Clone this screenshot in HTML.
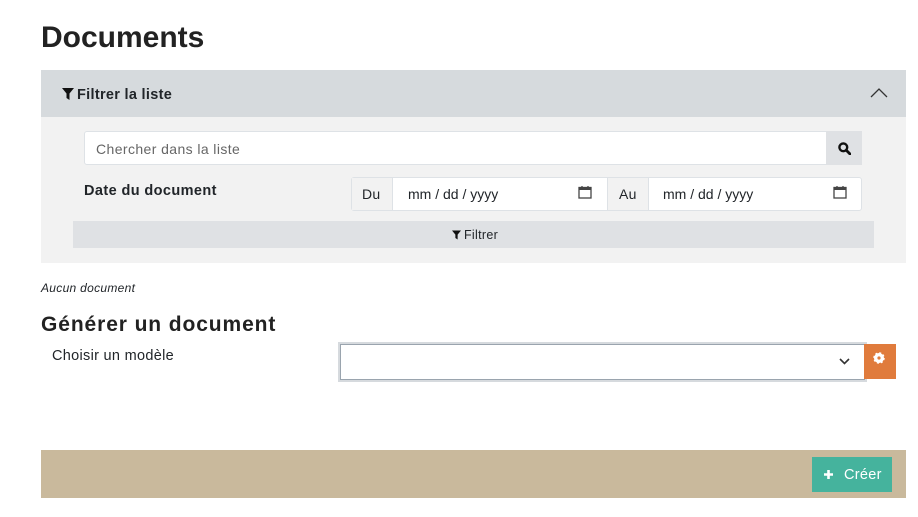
<!DOCTYPE html>
<html><head><style>
*{box-sizing:border-box;margin:0;padding:0}
body{width:918px;height:517px;background:#fff;font-family:"Liberation Sans",sans-serif;color:#212529;position:relative;overflow:hidden}
.a{position:absolute;letter-spacing:0.3px}
</style></head><body>
<div class="a" style="left:41px;top:21px;font-size:30px;font-weight:bold;color:#222;letter-spacing:0">Documents</div>
<div class="a" style="left:41px;top:70px;width:865px;height:47px;background:#d6dadd"></div>
<svg class="a" style="left:62px;top:88px" width="12" height="12" viewBox="0 0 12 12"><path d="M0 0H12L7.5 5.5V12L4.5 10V5.5Z" fill="#111"/></svg>
<div class="a" style="left:77px;top:87px;font-size:14.5px;font-weight:bold">Filtrer la liste</div>
<svg class="a" style="left:870px;top:88px" width="18" height="10" viewBox="0 0 18 10"><path d="M1 9L9 1L17 9" fill="none" stroke="#333" stroke-width="1.3"/></svg>
<div class="a" style="left:41px;top:117px;width:865px;height:146px;background:#f2f2f2"></div>
<div class="a" style="left:84px;top:131px;width:778px;height:34px;background:#fff;border:1px solid #dee2e6;border-radius:3px"></div>
<div class="a" style="left:96px;top:141px;font-size:14px;color:#666;letter-spacing:0.4px">Chercher dans la liste</div>
<div class="a" style="left:826px;top:131px;width:36px;height:34px;background:#dfe1e4"></div>
<svg class="a" style="left:838px;top:142px" width="13" height="13" viewBox="0 0 13 13"><circle cx="5.3" cy="5.3" r="3.9" fill="none" stroke="#111" stroke-width="2.4"/><path d="M8.3 8.3L12 12" stroke="#111" stroke-width="2.8" stroke-linecap="round"/></svg>
<div class="a" style="left:84px;top:183px;font-size:14.5px;font-weight:bold;letter-spacing:0.4px">Date du document</div>
<div class="a" style="left:351px;top:177px;width:511px;height:34px;background:#fff;border:1px solid #dee2e6;border-radius:3px"></div>
<div class="a" style="left:352px;top:178px;width:41px;height:32px;background:#f2f2f2;border-right:1px solid #dee2e6"></div>
<div class="a" style="left:607px;top:178px;width:42px;height:32px;background:#f2f2f2;border-left:1px solid #dee2e6;border-right:1px solid #dee2e6"></div>
<div class="a" style="left:362px;top:186px;font-size:14px">Du</div>
<div class="a" style="left:619px;top:186px;font-size:14px">Au</div>
<div class="a" style="left:408px;top:186px;font-size:14px;letter-spacing:0">mm / dd / yyyy</div>
<div class="a" style="left:663px;top:186px;font-size:14px;letter-spacing:0">mm / dd / yyyy</div>
<svg class="a" style="left:578px;top:185px" width="14" height="14" viewBox="0 0 14 14"><rect x="1" y="2.5" width="12" height="10.5" fill="none" stroke="#444" stroke-width="1.3"/><rect x="1" y="2.5" width="12" height="2.5" fill="#444"/><path d="M4 1V3M10 1V3" stroke="#444" stroke-width="1.3"/></svg>
<svg class="a" style="left:833px;top:185px" width="14" height="14" viewBox="0 0 14 14"><rect x="1" y="2.5" width="12" height="10.5" fill="none" stroke="#444" stroke-width="1.3"/><rect x="1" y="2.5" width="12" height="2.5" fill="#444"/><path d="M4 1V3M10 1V3" stroke="#444" stroke-width="1.3"/></svg>
<div class="a" style="left:73px;top:221px;width:801px;height:27px;background:#dfe1e4"></div>
<svg class="a" style="left:452px;top:230px" width="9" height="10" viewBox="0 0 12 12"><path d="M0 0H12L7.5 5.5V12L4.5 10V5.5Z" fill="#111"/></svg>
<div class="a" style="left:464px;top:228px;font-size:12.5px">Filtrer</div>
<div class="a" style="left:41px;top:281px;font-size:12px;font-style:italic">Aucun document</div>
<div class="a" style="left:41px;top:313px;font-size:21px;font-weight:bold;color:#222;letter-spacing:0.9px">Générer un document</div>
<div class="a" style="left:52px;top:348px;font-size:14.5px">Choisir un modèle</div>
<div class="a" style="left:340px;top:344px;width:525px;height:36px;background:#fff;border:1px solid #9aa4ae;box-shadow:0 0 0 2px #d6dade"></div>
<svg class="a" style="left:839px;top:358px" width="11" height="7" viewBox="0 0 11 7"><path d="M1 1L5.5 5.5L10 1" fill="none" stroke="#333" stroke-width="1.6"/></svg>
<div class="a" style="left:864px;top:344px;width:32px;height:35px;background:#e07b3c"></div>
<svg class="a" style="left:873px;top:352px" width="12" height="12" viewBox="0 0 12 12"><circle cx="6" cy="6" r="5" fill="#fff" stroke="#fff" stroke-width="1.5" stroke-dasharray="2 1.93"/><circle cx="6" cy="6" r="4.2" fill="#fff"/><circle cx="6" cy="6" r="1.6" fill="#e07b3c"/></svg>
<div class="a" style="left:41px;top:450px;width:865px;height:48px;background:#c9b99c"></div>
<div class="a" style="left:812px;top:457px;width:80px;height:35px;background:#45b39d"></div>
<svg class="a" style="left:823px;top:469px" width="11" height="11" viewBox="0 0 11 11"><path d="M5.5 1V10M1 5.5H10" stroke="#fff" stroke-width="2.6"/></svg>
<div class="a" style="left:844px;top:467px;font-size:14.5px;color:#fff">Créer</div>
</body></html>
